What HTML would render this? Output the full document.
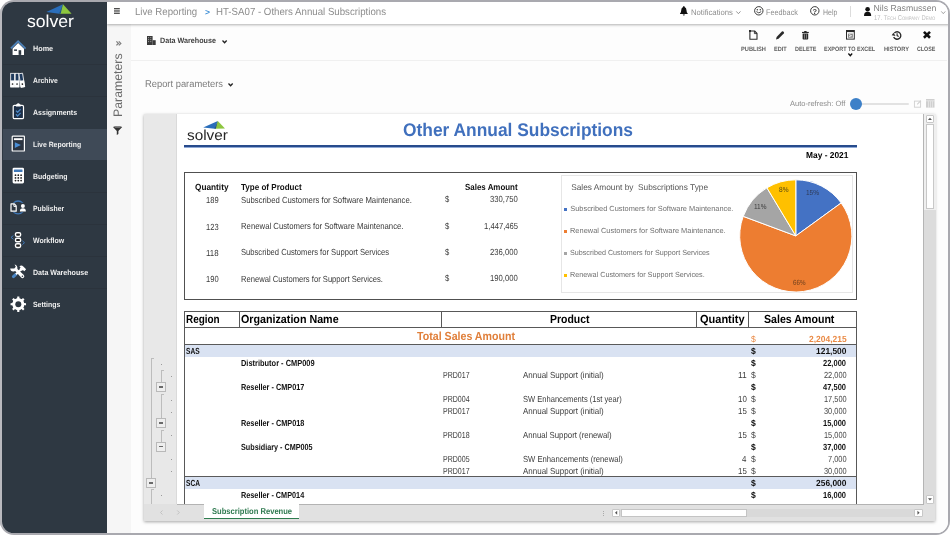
<!DOCTYPE html>
<html lang="en"><head><meta charset="utf-8"><title>Solver - Other Annual Subscriptions</title>
<style>
*{box-sizing:border-box;margin:0;padding:0}
html,body{width:950px;height:535px;background:#fff;overflow:hidden}
body{font-family:"Liberation Sans",sans-serif;position:relative}
#frame{position:absolute;left:0;top:0;width:950px;height:535px;border-radius:14px;overflow:hidden;background:#a9a9af}
#app{position:absolute;left:2.4px;top:1.8px;width:945.4px;height:530.8px;border-radius:11.5px;overflow:hidden;background:#fdfdfd}
#stage{position:absolute;left:-2.4px;top:-1.8px;width:950px;height:535px;will-change:transform}
.a{position:absolute}
.t{position:absolute;white-space:pre;transform-origin:0 50%;text-rendering:geometricPrecision}
svg{position:absolute;overflow:visible}
</style></head>
<body><div id="frame"><div class="a" style="left:0;top:8px;width:3px;height:519px;background:#b9b9be"></div><div id="app"><div id="stage">
<div class="a" style="left:107px;top:23px;width:24px;height:512px;background:#f6f6f6;"></div>
<div class="a" style="left:131px;top:23px;width:819px;height:512px;background:#fdfdfd;"></div>
<div class="a" style="left:107px;top:0px;width:843px;height:23.6px;background:#fff;box-shadow:0 0.5px 2.5px rgba(0,0,0,.3)"></div>
<div class="a" style="left:0px;top:0px;width:107px;height:535px;background:#2e3842;"></div>
<div class="a" style="left:2.5px;top:128.5px;width:104.5px;height:31.5px;background:#3f4a57;"></div>
<div class="a" style="left:2.5px;top:64px;width:104.5px;height:1px;background:#2b333c;"></div>
<div class="a" style="left:2.5px;top:96px;width:104.5px;height:1px;background:#2b333c;"></div>
<div class="a" style="left:2.5px;top:192px;width:104.5px;height:1px;background:#2b333c;"></div>
<div class="a" style="left:2.5px;top:224px;width:104.5px;height:1px;background:#2b333c;"></div>
<div class="a" style="left:2.5px;top:256px;width:104.5px;height:1px;background:#2b333c;"></div>
<div class="a" style="left:2.5px;top:288px;width:104.5px;height:1px;background:#2b333c;"></div>
<svg style="left:0px;top:0px" width="107" height="30" viewBox="0 0 107 30"><polygon points="46.3,12 63,4.2 59.4,13.8" fill="#2a6ebb"/><polygon points="63,4.2 71.6,13.8 59.4,13.8" fill="#8dc63f"/><polygon points="63,4.2 60.6,13.8 59,13.8" fill="#1d4f91"/></svg>
<svg style="left:10px;top:40px" width="16" height="16" viewBox="0 0 16 16"><polygon points="2.6,8.6 8.1,3 14,8.7 14,14.9 2.6,14.9" fill="#fff"/><polyline points="0.9,8.4 8.1,1.2 15.6,8.6" fill="none" stroke="#4d82ba" stroke-width="1.7" stroke-linejoin="miter"/><rect x="4.1" y="9.4" width="2.9" height="1.5" fill="#2e3842"/><rect x="8.6" y="10.2" width="2.6" height="4.7" fill="#2e3842"/></svg><svg style="left:10px;top:72px" width="16" height="16" viewBox="0 0 16 16"><rect x="0.7" y="1.3" width="3.7" height="13.6" fill="#1f3a5c" stroke="#fff" stroke-width="0.8"/><rect x="0.3" y="8.4" width="4.5" height="6.9" fill="#fff"/><circle cx="2.55" cy="12" r="0.85" fill="#222"/><rect x="5.2" y="1.3" width="3.7" height="13.6" fill="#1f3a5c" stroke="#fff" stroke-width="0.8"/><rect x="4.8" y="8.4" width="4.5" height="6.9" fill="#fff"/><circle cx="7.05" cy="12" r="0.85" fill="#222"/><g transform="rotate(-9 13 15)"><rect x="11.0" y="1.3" width="3.7" height="13.6" fill="#1f3a5c" stroke="#fff" stroke-width="0.8"/><rect x="10.6" y="8.4" width="4.5" height="6.9" fill="#fff"/><circle cx="12.85" cy="12" r="0.85" fill="#222"/></g></svg><svg style="left:10px;top:104px" width="16" height="16" viewBox="0 0 16 16"><rect x="3.2" y="1.4" width="10.3" height="13.3" rx="1.3" fill="#1d2f47" stroke="#fff" stroke-width="1.2"/><path d="M5.8,2.6 L6.6,0.2 Q8.3,-1.6 10,0.2 L10.8,2.6 Z" fill="#fff"/><polyline points="6,6.6 7.6,8.3 10.6,5.2" fill="none" stroke="#4a86c5" stroke-width="1.3"/><polyline points="6,10.3 7.6,12 10.6,8.9" fill="none" stroke="#4a86c5" stroke-width="1.3"/></svg><svg style="left:10px;top:136px" width="16" height="16" viewBox="0 0 16 16"><rect x="2.2" y="0.2" width="12.2" height="14.8" rx="0.6" fill="#2b3440" stroke="#fff" stroke-width="1.2"/><rect x="3.9" y="2.2" width="8.6" height="1.9" fill="#fff"/><polygon points="4.8,6.2 10.9,9.1 4.8,12" fill="#4a8fd6"/></svg><svg style="left:10px;top:168px" width="16" height="16" viewBox="0 0 16 16"><rect x="2.6" y="-0.3" width="11.4" height="15.7" rx="1.4" fill="#fff"/><rect x="3.9" y="1.6" width="8.6" height="2.5" rx="0.4" fill="#3f78b8"/><circle cx="5.5" cy="7.2" r="0.9" fill="#222"/><circle cx="5.5" cy="9.9" r="0.9" fill="#222"/><circle cx="5.5" cy="12.6" r="0.9" fill="#222"/><circle cx="8.3" cy="7.2" r="0.9" fill="#222"/><circle cx="8.3" cy="9.9" r="0.9" fill="#222"/><circle cx="8.3" cy="12.6" r="0.9" fill="#222"/><circle cx="11.1" cy="7.2" r="0.9" fill="#222"/><circle cx="11.1" cy="9.9" r="0.9" fill="#222"/><circle cx="11.1" cy="12.6" r="0.9" fill="#222"/></svg><svg style="left:10px;top:200px" width="16" height="16" viewBox="0 0 16 16"><circle cx="8.1" cy="7.4" r="6.4" fill="none" stroke="#3f78b8" stroke-width="1.3"/><rect x="-0.2" y="2.8" width="16.6" height="9.4" fill="#2e3842"/><path d="M1,3.9 H4.4 L6.2,5.8 V11.2 H1 Z" fill="none" stroke="#fff" stroke-width="1.2" stroke-linejoin="round"/><path d="M3.9,4 V6.4 H6" fill="none" stroke="#fff" stroke-width="1"/><circle cx="12.9" cy="6" r="2" fill="#fff"/><path d="M9.9,11.4 Q9.9,8.3 12.9,8.3 Q15.9,8.3 15.9,11.4 Z" fill="#fff"/></svg><svg style="left:10px;top:232px" width="16" height="16" viewBox="0 0 16 16"><rect x="5.5" y="0.7" width="5.1" height="3.7" rx="1.4" fill="#222" stroke="#fff" stroke-width="1.4"/><rect x="5.5" y="6.3" width="5.1" height="3.5" rx="1.4" fill="#222" stroke="#fff" stroke-width="1.4"/><rect x="5.5" y="11.7" width="5.1" height="3.8" rx="1.4" fill="#222" stroke="#fff" stroke-width="1.4"/><polyline points="3.4,3.6 1,5.4 3.4,7.2" fill="none" stroke="#3f78b8" stroke-width="1"/><polyline points="12.4,8.9 14.5,10.7 12.4,12.6" fill="none" stroke="#3f78b8" stroke-width="1"/></svg><svg style="left:10px;top:264px" width="16" height="16" viewBox="0 0 16 16"><line x1="3.4" y1="12.6" x2="5.6" y2="10.6" stroke="#4a86c5" stroke-width="3" stroke-linecap="round"/><line x1="6" y1="10.2" x2="11.5" y2="5" stroke="#fff" stroke-width="2"/><path d="M9.4,2.2 Q11.5,0.6 13.3,2.4 L16.1,5.3 L14.3,7.3 L12.9,6 L11.8,6.9 L9.6,4.6 L10.6,3.6 Z" fill="#fff"/><path d="M0.2,4.4 Q0.4,7.6 3.6,7.4 L5.2,7 L10.9,13.3 Q12.3,15 13.8,13.6 Q15.1,12.2 13.6,10.8 L7.4,4.9 Q7.7,1.4 4.6,0.6 L5.8,2.8 L4.3,4.6 L2.2,4.4 Z" fill="#fff"/><circle cx="12.4" cy="12.3" r="0.8" fill="#2e3842"/></svg><svg style="left:10px;top:296px" width="16" height="16" viewBox="0 0 16 16"><path d="M7.15,2.41 L7.26,0.47 L9.34,0.47 L9.45,2.41 L11.58,3.29 L13.03,2.00 L14.50,3.47 L13.21,4.92 L14.09,7.05 L16.03,7.16 L16.03,9.24 L14.09,9.35 L13.21,11.48 L14.50,12.93 L13.03,14.40 L11.58,13.11 L9.45,13.99 L9.34,15.93 L7.26,15.93 L7.15,13.99 L5.02,13.11 L3.57,14.40 L2.10,12.93 L3.39,11.48 L2.51,9.35 L0.57,9.24 L0.57,7.16 L2.51,7.05 L3.39,4.92 L2.10,3.47 L3.57,2.00 L5.02,3.29Z" fill="#fff"/><circle cx="8.3" cy="8.2" r="5.9" fill="#fff"/><circle cx="8.3" cy="8.2" r="3" fill="#2e3842"/></svg>
<div class="a" style="left:131px;top:60px;width:816px;height:1px;background:#f0f0f0;"></div>
<svg style="left:114.2px;top:8.3px" width="6" height="6" viewBox="0 0 6 6"><rect x="0" y="0" width="5.8" height="1.35" fill="#4d4d4d"/><rect x="0" y="2.3" width="5.8" height="1.35" fill="#4d4d4d"/><rect x="0" y="4.6" width="5.8" height="1.35" fill="#4d4d4d"/></svg><svg style="left:679.5px;top:6.2px" width="8" height="10" viewBox="0 0 8 10"><path d="M3.85,0 Q4.6,0 4.6,0.9 Q6.5,1.6 6.5,4.3 Q6.5,6.5 7.7,7.6 V8.1 H0 V7.6 Q1.2,6.5 1.2,4.3 Q1.2,1.6 3.1,0.9 Q3.1,0 3.85,0 Z" fill="#111"/><path d="M2.8,8.5 H4.9 Q4.9,9.6 3.85,9.6 Q2.8,9.6 2.8,8.5Z" fill="#111"/></svg><svg style="left:735.8px;top:11.2px" width="4.8" height="3.2" viewBox="0 0 4.8 3.2"><polyline points="0.3,0.4 2.4,2.7 4.5,0.4" fill="none" stroke="#8a8a8a" stroke-width="0.9"/></svg><svg style="left:753.7px;top:6.2px" width="10" height="10" viewBox="0 0 10 10"><circle cx="4.8" cy="4.8" r="4.2" fill="none" stroke="#3a3a3a" stroke-width="1"/><circle cx="3.3" cy="3.7" r="0.75" fill="#3a3a3a"/><circle cx="6.3" cy="3.7" r="0.75" fill="#3a3a3a"/><path d="M2.4,5.6 Q4.8,8.2 7.2,5.6" fill="none" stroke="#3a3a3a" stroke-width="0.9"/></svg><svg style="left:810.4px;top:6.2px" width="10" height="10" viewBox="0 0 10 10"><circle cx="4.8" cy="4.8" r="4.2" fill="none" stroke="#3a3a3a" stroke-width="1"/><text x="4.8" y="7.5" text-anchor="middle" font-family="Liberation Sans, sans-serif" font-weight="700" font-size="7.4" fill="#3a3a3a">?</text></svg><svg style="left:864.3px;top:7px" width="8" height="9.2" viewBox="0 0 8 9.2"><circle cx="3.6" cy="2.3" r="2.3" fill="#111"/><path d="M0,9 Q0,4.8 3.6,4.8 Q7.2,4.8 7.2,9 Z" fill="#111"/></svg><svg style="left:940.8px;top:10.8px" width="4.6" height="3.2" viewBox="0 0 4.6 3.2"><polyline points="0.3,0.4 2.3,2.7 4.3,0.4" fill="none" stroke="#9a9a9a" stroke-width="0.9"/></svg><svg style="left:147.2px;top:36px" width="9" height="9" viewBox="0 0 9 9"><rect x="0" y="0" width="5.6" height="9" fill="#3a3a3a"/><rect x="5.6" y="4.2" width="3.1" height="4.8" fill="#3a3a3a"/><rect x="1" y="1.2" width="1.1" height="0.9" fill="#fff" opacity="0.55"/><rect x="1" y="3.2" width="1.1" height="0.9" fill="#fff" opacity="0.55"/><rect x="1" y="5.2" width="1.1" height="0.9" fill="#fff" opacity="0.55"/><rect x="3.2" y="1.2" width="1.1" height="0.9" fill="#fff" opacity="0.55"/><rect x="3.2" y="3.2" width="1.1" height="0.9" fill="#fff" opacity="0.55"/><rect x="3.2" y="5.2" width="1.1" height="0.9" fill="#fff" opacity="0.55"/></svg><svg style="left:221.5px;top:39.6px" width="5.2" height="3.6" viewBox="0 0 5.2 3.6"><polyline points="0.5,0.5 2.6,2.7 4.7,0.5" fill="none" stroke="#222" stroke-width="1.3"/></svg><svg style="left:227.5px;top:82.6px" width="5.2" height="3.6" viewBox="0 0 5.2 3.6"><polyline points="0.5,0.5 2.6,2.7 4.7,0.5" fill="none" stroke="#222" stroke-width="1.3"/></svg><svg style="left:116px;top:41.1px" width="5.4" height="4.8" viewBox="0 0 5.4 4.8"><polyline points="0.4,0.4 2.4,2.4 0.4,4.4" fill="none" stroke="#808080" stroke-width="1.3"/><polyline points="2.8,0.4 4.8,2.4 2.8,4.4" fill="none" stroke="#808080" stroke-width="1.3"/></svg><svg style="left:112.9px;top:126.1px" width="9.4" height="9" viewBox="0 0 9.4 9"><path d="M0,0.9 Q4.6,-0.9 9.2,0.9 L5.4,4.9 V8 L3.8,8.9 V4.9 Z" fill="#333"/><ellipse cx="4.6" cy="0.9" rx="3.2" ry="0.55" fill="#aaa"/></svg>
<svg style="left:749.1px;top:30.1px" width="9" height="10" viewBox="0 0 9 10"><path d="M0.9,1 H5.6 L8,3.4 V9.2 H0.9 Z" fill="none" stroke="#2a2a2a" stroke-width="1.1" stroke-linejoin="round"/><path d="M5.4,1 V3.6 H8" fill="none" stroke="#2a2a2a" stroke-width="0.9"/><rect x="0" y="0" width="2" height="2" fill="#2a2a2a"/></svg><svg style="left:775.8px;top:30.7px" width="8.6" height="8.6" viewBox="0 0 8.6 8.6"><path d="M0,8.4 L0.6,5.9 L5.9,0.6 Q6.6,0 7.3,0.6 L7.9,1.2 Q8.4,1.9 7.8,2.5 L2.5,7.8 Z" fill="#2a2a2a"/></svg><svg style="left:802px;top:31px" width="7" height="8.8" viewBox="0 0 7 8.8"><rect x="0" y="0.9" width="6.8" height="1.1" fill="#2a2a2a"/><rect x="2.2" y="0" width="2.4" height="1.2" fill="#2a2a2a"/><path d="M0.6,2.6 H6.2 V7.8 Q6.2,8.6 5.4,8.6 H1.4 Q0.6,8.6 0.6,7.8 Z" fill="#2a2a2a"/><rect x="2.2" y="3.3" width="0.6" height="4.4" fill="#bbb"/><rect x="4" y="3.3" width="0.6" height="4.4" fill="#bbb"/></svg><svg style="left:845.8px;top:30.1px" width="9" height="9.6" viewBox="0 0 9 9.6"><rect x="0.5" y="0.5" width="7.8" height="8.6" fill="#fff" stroke="#2a2a2a" stroke-width="1"/><rect x="0.5" y="0.5" width="7.8" height="1.6" fill="#2a2a2a"/><rect x="1.9" y="3.6" width="5" height="4.2" fill="#888"/><path d="M3,4.6 L5.6,5.7 L3,6.8" fill="none" stroke="#fff" stroke-width="0.8"/></svg><svg style="left:847.8px;top:52.6px" width="4.6" height="3.6" viewBox="0 0 4.6 3.6"><polyline points="0.4,0.5 2.3,2.7 4.2,0.5" fill="none" stroke="#111" stroke-width="1.3"/></svg><svg style="left:892.1px;top:30.7px" width="9.2" height="8.6" viewBox="0 0 9.2 8.6"><path d="M2.3,2.1 A3.7,3.7 0 1 1 1.7,5.9" fill="none" stroke="#2a2a2a" stroke-width="1.35"/><polygon points="-0.3,3.3 3.6,3.9 1.4,0.8" fill="#2a2a2a" transform="translate(0,1)"/><polyline points="5.1,2.3 5.1,4.6 6.7,5.4" fill="none" stroke="#2a2a2a" stroke-width="1.1"/></svg><svg style="left:922.5px;top:31.3px" width="7.8" height="7.6" viewBox="0 0 7.8 7.6"><line x1="0.9" y1="0.9" x2="7" y2="6.7" stroke="#111" stroke-width="2.6"/><line x1="7" y1="0.9" x2="0.9" y2="6.7" stroke="#111" stroke-width="2.6"/></svg><svg style="left:914.3px;top:100.4px" width="7.6" height="7.6" viewBox="0 0 7.6 7.6"><rect x="0.4" y="1.1" width="6.2" height="6.1" fill="none" stroke="#cfcfcf" stroke-width="0.9"/><line x1="3.2" y1="4.4" x2="6.9" y2="0.6" stroke="#cfcfcf" stroke-width="1.1"/></svg><svg style="left:926.3px;top:99.4px" width="8.6" height="8.6" viewBox="0 0 8.6 8.6"><rect x="0" y="0" width="8.5" height="8.6" fill="#cfcfcf"/><rect x="2.1" y="2.2" width="0.5" height="6.4" fill="#f4f4f4"/><rect x="4.1" y="2.2" width="0.5" height="6.4" fill="#f4f4f4"/><rect x="6.1" y="2.2" width="0.5" height="6.4" fill="#f4f4f4"/><rect x="0" y="1.6" width="8.5" height="0.6" fill="#f4f4f4"/></svg>
<div class="a" style="left:850px;top:5.8px;width:1px;height:11.6px;background:#dcdcdc;"></div>
<span class="t" style="left:87px;top:79px;width:62px;height:14px;line-height:14px;font-size:12.3px;color:#6a6a6a;text-align:center;transform:rotate(-90deg);transform-origin:50% 50%">Parameters</span>
<div class="a" style="left:856px;top:103.2px;width:53px;height:2px;background:#e2e2e2;border-radius:1px"></div>
<div class="a" style="left:849.8px;top:98.3px;width:12px;height:12px;background:#3d80c8;border-radius:50%"></div>
<div class="a" style="left:144.3px;top:113.5px;width:791.2px;height:407.79999999999995px;background:#e8e8e8;box-shadow:0 1px 3px rgba(0,0,0,.35)"></div>
<div class="a" style="left:175.8px;top:113.5px;width:1px;height:390.5px;background:#dadada;"></div>
<div class="a" style="left:176.8px;top:113.5px;width:746.7px;height:390.5px;background:#fff;"></div>
<div class="a" style="left:923.5px;top:113.5px;width:12px;height:390.5px;background:#dcdcdc;"></div>
<div class="a" style="left:923.5px;top:113.5px;width:12px;height:96px;background:#efefef;"></div>
<div class="a" style="left:923.2px;top:113.5px;width:1px;height:390.5px;background:#b5b5b5;"></div>
<div class="a" style="left:925.7px;top:114.8px;width:8.5px;height:8.5px;background:#fff;border:1px solid #c8c8c8;border-radius:1px"></div>
<svg style="left:0px;top:0px" width="950" height="535" viewBox="0 0 950 535"><polygon points="927.95,120.05 929.95,117.85 931.95,120.05" fill="#555"/></svg>
<div class="a" style="left:925.7px;top:123.8px;width:8.5px;height:85px;background:#fff;border:1px solid #c8c8c8"></div>
<div class="a" style="left:925.7px;top:495px;width:8.5px;height:8.5px;background:#fff;border:1px solid #c8c8c8;border-radius:1px"></div>
<svg style="left:0px;top:0px" width="950" height="535" viewBox="0 0 950 535"><polygon points="927.95,498.25 929.95,500.45 931.95,498.25" fill="#555"/></svg>
<div class="a" style="left:144.3px;top:504px;width:791.2px;height:17.299999999999955px;background:#e1e1e1;"></div>
<div class="a" style="left:176.8px;top:503.6px;width:747px;height:1px;background:#b3b3b3;"></div>
<div class="a" style="left:203.5px;top:504px;width:95.7px;height:14.5px;background:#fff;border-bottom:1.3px solid #2e7d4f"></div>
<svg style="left:0px;top:0px" width="950" height="535" viewBox="0 0 950 535"><polyline points="162.5,510.5 160.5,512.5 162.5,514.5" fill="none" stroke="#c2c2c2" stroke-width="1"/><polyline points="177.3,510.5 179.3,512.5 177.3,514.5" fill="none" stroke="#c2c2c2" stroke-width="1"/></svg>
<div class="a" style="left:611.9px;top:508.5px;width:311px;height:8.4px;background:#d9d9d9;"></div>
<div class="a" style="left:620.5px;top:508.5px;width:126px;height:8.4px;background:#fff;border:1px solid #c4c4c4"></div>
<div class="a" style="left:611.9px;top:508.5px;width:8.6px;height:8.4px;background:#fff;border:1px solid #c8c8c8;border-radius:1px"></div>
<svg style="left:0px;top:0px" width="950" height="535" viewBox="0 0 950 535"><polygon points="617.1999999999999,510.70000000000005 614.9999999999999,512.7 617.1999999999999,514.7" fill="#555"/></svg>
<div class="a" style="left:914.2px;top:508.5px;width:8.5px;height:8.4px;background:#fff;border:1px solid #c8c8c8;border-radius:1px"></div>
<svg style="left:0px;top:0px" width="950" height="535" viewBox="0 0 950 535"><polygon points="917.45,510.70000000000005 919.6500000000001,512.7 917.45,514.7" fill="#555"/></svg>
<div class="a" style="left:603px;top:510.6px;width:1px;height:1px;background:#aaa;"></div>
<div class="a" style="left:603px;top:512.6px;width:1px;height:1px;background:#aaa;"></div>
<div class="a" style="left:603px;top:514.6px;width:1px;height:1px;background:#aaa;"></div>
<svg style="left:0px;top:0px" width="950" height="535" viewBox="0 0 950 535"><polygon points="203.2,127.6 217.8,121.1 214.6,128.8" fill="#2a6ebb"/><polygon points="217.8,121.1 225,128.6 214.6,128.8" fill="#8dc63f"/><polygon points="217.8,121.1 215.8,128.8 214.2,128.8" fill="#1d4f91"/></svg>
<div class="a" style="left:184px;top:144.7px;width:672.7px;height:2px;background:#274b8c;"></div>
<div class="a" style="left:184px;top:146.7px;width:672.7px;height:0.8px;background:#8fa9d6;"></div>
<div class="a" style="left:183.6px;top:172.4px;width:673.4px;height:127.4px;border:1px solid #505050"></div>
<div class="a" style="left:561px;top:175.2px;width:292px;height:118.2px;background:#fff;border:1px solid #e6e6e6"></div>
<div class="a" style="left:564px;top:207.6px;width:3.2px;height:3.2px;background:#4472c4;"></div>
<div class="a" style="left:564px;top:229.6px;width:3.2px;height:3.2px;background:#ed7d31;"></div>
<div class="a" style="left:564px;top:251.6px;width:3.2px;height:3.2px;background:#a5a5a5;"></div>
<div class="a" style="left:564px;top:273.6px;width:3.2px;height:3.2px;background:#ffc000;"></div>
<svg style="left:0px;top:0px" width="950" height="535" viewBox="0 0 950 535"><path d="M795.8,235.9 L795.80,179.80 A56.1,56.1 0 0 1 841.19,202.93 Z" fill="#4472c4" stroke="#fff" stroke-width="1" stroke-linejoin="round"/><path d="M795.8,235.9 L841.19,202.93 A56.1,56.1 0 1 1 743.22,216.35 Z" fill="#ed7d31" stroke="#fff" stroke-width="1" stroke-linejoin="round"/><path d="M795.8,235.9 L743.22,216.35 A56.1,56.1 0 0 1 766.91,187.81 Z" fill="#a5a5a5" stroke="#fff" stroke-width="1" stroke-linejoin="round"/><path d="M795.8,235.9 L766.91,187.81 A56.1,56.1 0 0 1 795.80,179.80 Z" fill="#ffc000" stroke="#fff" stroke-width="1" stroke-linejoin="round"/></svg>
<div class="a" style="left:183.8px;top:310.7px;width:673.2px;height:17.3px;border:1px solid #585858"></div>
<div class="a" style="left:239.1px;top:311px;width:1px;height:17px;background:#585858;"></div>
<div class="a" style="left:441.3px;top:311px;width:1px;height:17px;background:#585858;"></div>
<div class="a" style="left:696.3px;top:311px;width:1px;height:17px;background:#585858;"></div>
<div class="a" style="left:747.8px;top:311px;width:1px;height:17px;background:#585858;"></div>
<div class="a" style="left:183.8px;top:328px;width:1px;height:176px;background:#585858;"></div>
<div class="a" style="left:856px;top:328px;width:1px;height:175.5px;background:#585858;"></div>
<div class="a" style="left:184px;top:344px;width:673px;height:1px;background:#5a5a5a;"></div>
<div class="a" style="left:184.8px;top:345px;width:671.2px;height:12.1px;background:#d9e2f2;"></div>
<div class="a" style="left:184px;top:476.2px;width:673px;height:1px;background:#5a5a5a;"></div>
<div class="a" style="left:184.8px;top:477.2px;width:671.2px;height:11.5px;background:#d9e2f2;"></div>
<div class="a" style="left:151.2px;top:358px;width:1px;height:120px;background:#bcbcbc;"></div>
<div class="a" style="left:151.2px;top:358px;width:3px;height:1px;background:#bcbcbc;"></div>
<div class="a" style="left:160.7px;top:370px;width:1px;height:12.5px;background:#bcbcbc;"></div>
<div class="a" style="left:160.7px;top:370px;width:3px;height:1px;background:#bcbcbc;"></div>
<div class="a" style="left:160.7px;top:394.2px;width:1px;height:24px;background:#bcbcbc;"></div>
<div class="a" style="left:160.7px;top:394.2px;width:3px;height:0.8px;background:#bcbcbc;"></div>
<div class="a" style="left:160.7px;top:430.2px;width:1px;height:12px;background:#bcbcbc;"></div>
<div class="a" style="left:160.7px;top:430.2px;width:3px;height:0.8px;background:#bcbcbc;"></div>
<div class="a" style="left:151.2px;top:488.5px;width:1px;height:15.5px;background:#bcbcbc;"></div>
<div class="a" style="left:151.2px;top:488.5px;width:3px;height:1px;background:#bcbcbc;"></div>
<div class="a" style="left:155.9px;top:381.9px;width:10.4px;height:10.4px;background:#eeeeee;border:1px solid #b9b9b9"></div>
<div class="a" style="left:158.9px;top:386.4px;width:4.4px;height:1.3px;background:#6a6a6a;"></div>
<div class="a" style="left:155.9px;top:417.79999999999995px;width:10.4px;height:10.4px;background:#eeeeee;border:1px solid #b9b9b9"></div>
<div class="a" style="left:158.9px;top:422.29999999999995px;width:4.4px;height:1.3px;background:#6a6a6a;"></div>
<div class="a" style="left:155.9px;top:441.7px;width:10.4px;height:10.4px;background:#eeeeee;border:1px solid #b9b9b9"></div>
<div class="a" style="left:158.9px;top:446.2px;width:4.4px;height:1.3px;background:#6a6a6a;"></div>
<div class="a" style="left:146.10000000000002px;top:477.9px;width:10.4px;height:10.4px;background:#eeeeee;border:1px solid #b9b9b9"></div>
<div class="a" style="left:149.10000000000002px;top:482.4px;width:4.4px;height:1.3px;background:#6a6a6a;"></div>
<div class="a" style="left:161.2px;top:364px;width:1px;height:1px;background:#9a9a9a;"></div>
<div class="a" style="left:171.2px;top:376px;width:1px;height:1px;background:#9a9a9a;"></div>
<div class="a" style="left:171.2px;top:399.5px;width:1px;height:1px;background:#9a9a9a;"></div>
<div class="a" style="left:171.2px;top:411.5px;width:1px;height:1px;background:#9a9a9a;"></div>
<div class="a" style="left:171.2px;top:435.4px;width:1px;height:1px;background:#9a9a9a;"></div>
<div class="a" style="left:171.2px;top:459.2px;width:1px;height:1px;background:#9a9a9a;"></div>
<div class="a" style="left:171.2px;top:471.2px;width:1px;height:1px;background:#9a9a9a;"></div>
<div class="a" style="left:161.2px;top:495.3px;width:1px;height:1px;background:#9a9a9a;"></div>
<span class="t" style="left:26.90px;top:11px;font-size:17.20px;line-height:20px;color:#fff;transform:scaleX(1.0249);">solver</span>
<span class="t" style="left:32.90px;top:44px;font-size:7.60px;line-height:9px;color:#f0f0f0;font-weight:700;transform:scaleX(0.9522);">Home</span>
<span class="t" style="left:32.90px;top:76px;font-size:7.60px;line-height:9px;color:#f0f0f0;font-weight:700;transform:scaleX(0.8902);">Archive</span>
<span class="t" style="left:32.90px;top:108px;font-size:7.60px;line-height:9px;color:#f0f0f0;font-weight:700;transform:scaleX(0.9248);">Assignments</span>
<span class="t" style="left:32.90px;top:140px;font-size:7.60px;line-height:9px;color:#f0f0f0;font-weight:700;transform:scaleX(0.9046);">Live Reporting</span>
<span class="t" style="left:32.90px;top:172px;font-size:7.60px;line-height:9px;color:#f0f0f0;font-weight:700;transform:scaleX(0.9162);">Budgeting</span>
<span class="t" style="left:32.90px;top:204px;font-size:7.60px;line-height:9px;color:#f0f0f0;font-weight:700;transform:scaleX(0.8986);">Publisher</span>
<span class="t" style="left:32.90px;top:236px;font-size:7.60px;line-height:9px;color:#f0f0f0;font-weight:700;transform:scaleX(0.9139);">Workflow</span>
<span class="t" style="left:32.90px;top:268px;font-size:7.60px;line-height:9px;color:#f0f0f0;font-weight:700;transform:scaleX(0.9304);">Data Warehouse</span>
<span class="t" style="left:32.90px;top:300px;font-size:7.60px;line-height:9px;color:#f0f0f0;font-weight:700;transform:scaleX(0.9109);">Settings</span>
<span class="t" style="left:134.80px;top:7px;font-size:10.30px;line-height:11px;color:#8c8c8c;transform:scaleX(0.9367);">Live Reporting</span>
<span class="t" style="left:205.00px;top:7px;font-size:8.56px;line-height:10px;color:#3f8fd6;font-weight:700;">&gt;</span>
<span class="t" style="left:216.00px;top:7px;font-size:10.30px;line-height:11px;color:#8c8c8c;transform:scaleX(0.9400);">HT-SA07 - Others Annual Subscriptions</span>
<span class="t" style="left:691.00px;top:8px;font-size:8.10px;line-height:9px;color:#8c8c8c;transform:scaleX(0.9502);">Notifications</span>
<span class="t" style="left:766.20px;top:8px;font-size:8.10px;line-height:9px;color:#8c8c8c;transform:scaleX(0.8974);">Feedback</span>
<span class="t" style="left:823.40px;top:8px;font-size:8.10px;line-height:9px;color:#8c8c8c;transform:scaleX(0.8585);">Help</span>
<span class="t" style="left:873.60px;top:3px;font-size:8.70px;line-height:10px;color:#808080;">Nils Rasmussen</span>
<span class="t" style="left:873.80px;top:15px;font-size:7.00px;line-height:7px;color:#c0c0c0;transform:scaleX(0.8375);font-variant:small-caps;">17. Tech Company Demo</span>
<span class="t" style="left:160.00px;top:36px;font-size:7.80px;line-height:9px;color:#404040;font-weight:700;transform:scaleX(0.9209);">Data Warehouse</span>
<span class="t" style="left:145.00px;top:79px;font-size:9.80px;line-height:11px;color:#7d7d7d;transform:scaleX(0.9549);">Report parameters</span>
<span class="t" style="left:790.20px;top:99px;font-size:7.60px;line-height:9px;color:#8c8c8c;transform:scaleX(0.9875);">Auto-refresh: Off</span>
<span class="t" style="left:741.00px;top:46px;font-size:6.30px;line-height:7px;color:#606060;font-weight:700;transform:scaleX(0.9008);">PUBLISH</span>
<span class="t" style="left:773.80px;top:46px;font-size:6.30px;line-height:7px;color:#606060;font-weight:700;transform:scaleX(0.8854);">EDIT</span>
<span class="t" style="left:794.50px;top:46px;font-size:6.30px;line-height:7px;color:#606060;font-weight:700;transform:scaleX(0.8654);">DELETE</span>
<span class="t" style="left:824.10px;top:46px;font-size:6.30px;line-height:7px;color:#606060;font-weight:700;transform:scaleX(0.8676);">EXPORT TO EXCEL</span>
<span class="t" style="left:884.00px;top:46px;font-size:6.30px;line-height:7px;color:#606060;font-weight:700;transform:scaleX(0.9040);">HISTORY</span>
<span class="t" style="left:917.00px;top:46px;font-size:6.30px;line-height:7px;color:#606060;font-weight:700;transform:scaleX(0.8432);">CLOSE</span>
<span class="t" style="left:211.60px;top:506px;font-size:8.50px;line-height:10px;color:#2f7a50;font-weight:700;transform:scaleX(0.8925);">Subscription Revenue</span>
<span class="t" style="left:186.80px;top:128px;font-size:14.60px;line-height:16px;color:#262626;transform:scaleX(1.0504);">solver</span>
<span class="t" style="left:403.00px;top:119px;font-size:18.30px;line-height:21px;color:#4070bd;font-weight:700;transform:scaleX(0.9501);">Other Annual Subscriptions</span>
<span class="t" style="left:806.40px;top:150px;font-size:8.60px;line-height:10px;color:#000;font-weight:700;transform:scaleX(0.9751);">May - 2021</span>
<span class="t" style="left:195.30px;top:182px;font-size:8.80px;line-height:10px;color:#111;font-weight:700;transform:scaleX(0.9387);">Quantity</span>
<span class="t" style="left:241.00px;top:182px;font-size:8.80px;line-height:10px;color:#111;font-weight:700;transform:scaleX(0.9154);">Type of Product</span>
<span class="t" style="left:464.90px;top:182px;font-size:8.80px;line-height:10px;color:#111;font-weight:700;transform:scaleX(0.9016);">Sales Amount</span>
<span class="t" style="left:206.00px;top:195px;font-size:8.80px;line-height:10px;color:#3a3a3a;transform:scaleX(0.8579);">189</span>
<span class="t" style="left:241.00px;top:195px;font-size:8.80px;line-height:10px;color:#3a3a3a;transform:scaleX(0.8804);">Subscribed Customers for Software Maintenance.</span>
<span class="t" style="left:444.80px;top:194px;font-size:8.80px;line-height:10px;color:#3a3a3a;transform:scaleX(0.8764);">$</span>
<span class="t" style="left:490.00px;top:194px;font-size:8.80px;line-height:10px;color:#3a3a3a;transform:scaleX(0.8770);">330,750</span>
<span class="t" style="left:206.00px;top:222px;font-size:8.80px;line-height:10px;color:#3a3a3a;transform:scaleX(0.8579);">123</span>
<span class="t" style="left:241.00px;top:221px;font-size:8.80px;line-height:10px;color:#3a3a3a;transform:scaleX(0.8815);">Renewal Customers for Software Maintenance.</span>
<span class="t" style="left:444.80px;top:221px;font-size:8.80px;line-height:10px;color:#3a3a3a;transform:scaleX(0.8764);">$</span>
<span class="t" style="left:483.80px;top:221px;font-size:8.80px;line-height:10px;color:#3a3a3a;transform:scaleX(0.8712);">1,447,465</span>
<span class="t" style="left:206.00px;top:248px;font-size:8.80px;line-height:10px;color:#3a3a3a;transform:scaleX(0.8980);">118</span>
<span class="t" style="left:241.00px;top:247px;font-size:8.80px;line-height:10px;color:#3a3a3a;transform:scaleX(0.8654);">Subscribed Customers for Support Services</span>
<span class="t" style="left:444.80px;top:247px;font-size:8.80px;line-height:10px;color:#3a3a3a;transform:scaleX(0.8764);">$</span>
<span class="t" style="left:490.00px;top:247px;font-size:8.80px;line-height:10px;color:#3a3a3a;transform:scaleX(0.8770);">236,000</span>
<span class="t" style="left:206.00px;top:274px;font-size:8.80px;line-height:10px;color:#3a3a3a;transform:scaleX(0.8579);">190</span>
<span class="t" style="left:241.00px;top:274px;font-size:8.80px;line-height:10px;color:#3a3a3a;transform:scaleX(0.8669);">Renewal Customers for Support Services.</span>
<span class="t" style="left:444.80px;top:273px;font-size:8.80px;line-height:10px;color:#3a3a3a;transform:scaleX(0.8764);">$</span>
<span class="t" style="left:490.00px;top:273px;font-size:8.80px;line-height:10px;color:#3a3a3a;transform:scaleX(0.8770);">190,000</span>
<span class="t" style="left:571.20px;top:182px;font-size:8.30px;line-height:10px;color:#555;">Sales Amount by  Subscriptions Type</span>
<span class="t" style="left:570.30px;top:204px;font-size:7.40px;line-height:9px;color:#707070;">Subscribed Customers for Software Maintenance.</span>
<span class="t" style="left:570.30px;top:226px;font-size:7.40px;line-height:9px;color:#707070;transform:scaleX(1.0053);">Renewal Customers for Software Maintenance.</span>
<span class="t" style="left:570.30px;top:248px;font-size:7.40px;line-height:9px;color:#707070;transform:scaleX(0.9716);">Subscribed Customers for Support Services</span>
<span class="t" style="left:570.30px;top:270px;font-size:7.40px;line-height:9px;color:#707070;transform:scaleX(0.9789);">Renewal Customers for Support Services.</span>
<span class="t" style="left:806.00px;top:188px;font-size:7.40px;line-height:9px;color:#2f3a55;transform:scaleX(0.8786);">15%</span>
<span class="t" style="left:793.00px;top:278px;font-size:7.40px;line-height:9px;color:#6a3d1c;transform:scaleX(0.8448);">66%</span>
<span class="t" style="left:754.00px;top:202px;font-size:7.40px;line-height:9px;color:#3c3c3c;transform:scaleX(0.8772);">11%</span>
<span class="t" style="left:779.00px;top:185px;font-size:7.40px;line-height:9px;color:#5a4a10;transform:scaleX(0.8889);">8%</span>
<span class="t" style="left:185.80px;top:313px;font-size:11.70px;line-height:13px;color:#000;font-weight:700;transform:scaleX(0.8508);">Region</span>
<span class="t" style="left:241.40px;top:313px;font-size:11.70px;line-height:13px;color:#000;font-weight:700;transform:scaleX(0.9163);">Organization Name</span>
<span class="t" style="left:549.60px;top:313px;font-size:11.70px;line-height:13px;color:#000;font-weight:700;transform:scaleX(0.8946);">Product</span>
<span class="t" style="left:700.20px;top:313px;font-size:11.70px;line-height:13px;color:#000;font-weight:700;transform:scaleX(0.9408);">Quantity</span>
<span class="t" style="left:764.10px;top:313px;font-size:11.70px;line-height:13px;color:#000;font-weight:700;transform:scaleX(0.9084);">Sales Amount</span>
<span class="t" style="left:417.40px;top:330px;font-size:11.70px;line-height:13px;color:#e07f3a;font-weight:700;transform:scaleX(0.9091);">Total Sales Amount</span>
<span class="t" style="left:751.10px;top:334px;font-size:8.80px;line-height:10px;color:#ea8a45;transform:scaleX(0.9783);">$</span>
<span class="t" style="left:808.70px;top:334px;font-size:8.80px;line-height:10px;color:#ea8a45;font-weight:700;transform:scaleX(0.9606);">2,204,215</span>
<span class="t" style="left:185.60px;top:346px;font-size:8.80px;line-height:10px;color:#111;font-weight:700;transform:scaleX(0.7516);">SAS</span>
<span class="t" style="left:185.60px;top:478px;font-size:8.80px;line-height:10px;color:#111;font-weight:700;transform:scaleX(0.7536);">SCA</span>
<span class="t" style="left:815.80px;top:346px;font-size:8.80px;line-height:10px;color:#111;font-weight:700;transform:scaleX(0.9587);">121,500</span>
<span class="t" style="left:751.10px;top:346px;font-size:8.80px;line-height:10px;color:#111;font-weight:700;transform:scaleX(0.9783);">$</span>
<span class="t" style="left:823.30px;top:358px;font-size:8.80px;line-height:10px;color:#111;font-weight:700;transform:scaleX(0.8548);">22,000</span>
<span class="t" style="left:751.10px;top:358px;font-size:8.80px;line-height:10px;color:#111;font-weight:700;transform:scaleX(0.9783);">$</span>
<span class="t" style="left:241.40px;top:358px;font-size:8.80px;line-height:10px;color:#111;font-weight:700;transform:scaleX(0.8458);">Distributor - CMP009</span>
<span class="t" style="left:823.70px;top:370px;font-size:8.80px;line-height:10px;color:#444;transform:scaleX(0.8400);">22,000</span>
<span class="t" style="left:751.10px;top:370px;font-size:8.80px;line-height:10px;color:#444;transform:scaleX(0.9783);">$</span>
<span class="t" style="left:443.10px;top:370px;font-size:8.80px;line-height:10px;color:#3c3c3c;transform:scaleX(0.7996);">PRD017</span>
<span class="t" style="left:523.30px;top:370px;font-size:8.80px;line-height:10px;color:#3c3c3c;transform:scaleX(0.9067);">Annual Support (initial)</span>
<span class="t" style="left:737.90px;top:370px;font-size:8.80px;line-height:10px;color:#3c3c3c;transform:scaleX(0.9627);">11</span>
<span class="t" style="left:823.30px;top:382px;font-size:8.80px;line-height:10px;color:#111;font-weight:700;transform:scaleX(0.8548);">47,500</span>
<span class="t" style="left:751.10px;top:382px;font-size:8.80px;line-height:10px;color:#111;font-weight:700;transform:scaleX(0.9783);">$</span>
<span class="t" style="left:241.40px;top:382px;font-size:8.80px;line-height:10px;color:#111;font-weight:700;transform:scaleX(0.8311);">Reseller - CMP017</span>
<span class="t" style="left:823.70px;top:394px;font-size:8.80px;line-height:10px;color:#444;transform:scaleX(0.8400);">17,500</span>
<span class="t" style="left:751.10px;top:394px;font-size:8.80px;line-height:10px;color:#444;transform:scaleX(0.9783);">$</span>
<span class="t" style="left:443.10px;top:394px;font-size:8.80px;line-height:10px;color:#3c3c3c;transform:scaleX(0.7996);">PRD004</span>
<span class="t" style="left:523.30px;top:394px;font-size:8.80px;line-height:10px;color:#3c3c3c;transform:scaleX(0.8590);">SW Enhancements (1st year)</span>
<span class="t" style="left:737.90px;top:394px;font-size:8.80px;line-height:10px;color:#3c3c3c;transform:scaleX(0.8982);">10</span>
<span class="t" style="left:823.70px;top:406px;font-size:8.80px;line-height:10px;color:#444;transform:scaleX(0.8400);">30,000</span>
<span class="t" style="left:751.10px;top:406px;font-size:8.80px;line-height:10px;color:#444;transform:scaleX(0.9783);">$</span>
<span class="t" style="left:443.10px;top:406px;font-size:8.80px;line-height:10px;color:#3c3c3c;transform:scaleX(0.7996);">PRD017</span>
<span class="t" style="left:523.30px;top:406px;font-size:8.80px;line-height:10px;color:#3c3c3c;transform:scaleX(0.9067);">Annual Support (initial)</span>
<span class="t" style="left:737.90px;top:406px;font-size:8.80px;line-height:10px;color:#3c3c3c;transform:scaleX(0.8982);">15</span>
<span class="t" style="left:823.30px;top:418px;font-size:8.80px;line-height:10px;color:#111;font-weight:700;transform:scaleX(0.8548);">15,000</span>
<span class="t" style="left:751.10px;top:418px;font-size:8.80px;line-height:10px;color:#111;font-weight:700;transform:scaleX(0.9783);">$</span>
<span class="t" style="left:241.40px;top:418px;font-size:8.80px;line-height:10px;color:#111;font-weight:700;transform:scaleX(0.8311);">Reseller - CMP018</span>
<span class="t" style="left:823.70px;top:430px;font-size:8.80px;line-height:10px;color:#444;transform:scaleX(0.8400);">15,000</span>
<span class="t" style="left:751.10px;top:430px;font-size:8.80px;line-height:10px;color:#444;transform:scaleX(0.9783);">$</span>
<span class="t" style="left:443.10px;top:430px;font-size:8.80px;line-height:10px;color:#3c3c3c;transform:scaleX(0.7996);">PRD018</span>
<span class="t" style="left:523.30px;top:430px;font-size:8.80px;line-height:10px;color:#3c3c3c;transform:scaleX(0.8891);">Annual Support (renewal)</span>
<span class="t" style="left:737.90px;top:430px;font-size:8.80px;line-height:10px;color:#3c3c3c;transform:scaleX(0.8982);">15</span>
<span class="t" style="left:823.30px;top:442px;font-size:8.80px;line-height:10px;color:#111;font-weight:700;transform:scaleX(0.8548);">37,000</span>
<span class="t" style="left:751.10px;top:442px;font-size:8.80px;line-height:10px;color:#111;font-weight:700;transform:scaleX(0.9783);">$</span>
<span class="t" style="left:241.40px;top:442px;font-size:8.80px;line-height:10px;color:#111;font-weight:700;transform:scaleX(0.8227);">Subsidiary - CMP005</span>
<span class="t" style="left:827.70px;top:454px;font-size:8.80px;line-height:10px;color:#444;transform:scaleX(0.8449);">7,000</span>
<span class="t" style="left:751.10px;top:454px;font-size:8.80px;line-height:10px;color:#444;transform:scaleX(0.9783);">$</span>
<span class="t" style="left:443.10px;top:454px;font-size:8.80px;line-height:10px;color:#3c3c3c;transform:scaleX(0.7996);">PRD005</span>
<span class="t" style="left:523.30px;top:454px;font-size:8.80px;line-height:10px;color:#3c3c3c;transform:scaleX(0.8713);">SW Enhancements (renewal)</span>
<span class="t" style="left:742.30px;top:454px;font-size:8.80px;line-height:10px;color:#3c3c3c;transform:scaleX(0.8968);">4</span>
<span class="t" style="left:823.70px;top:466px;font-size:8.80px;line-height:10px;color:#444;transform:scaleX(0.8400);">30,000</span>
<span class="t" style="left:751.10px;top:466px;font-size:8.80px;line-height:10px;color:#444;transform:scaleX(0.9783);">$</span>
<span class="t" style="left:443.10px;top:466px;font-size:8.80px;line-height:10px;color:#3c3c3c;transform:scaleX(0.7996);">PRD017</span>
<span class="t" style="left:523.30px;top:466px;font-size:8.80px;line-height:10px;color:#3c3c3c;transform:scaleX(0.9067);">Annual Support (initial)</span>
<span class="t" style="left:737.90px;top:466px;font-size:8.80px;line-height:10px;color:#3c3c3c;transform:scaleX(0.8982);">15</span>
<span class="t" style="left:815.80px;top:478px;font-size:8.80px;line-height:10px;color:#111;font-weight:700;transform:scaleX(0.9587);">256,000</span>
<span class="t" style="left:751.10px;top:478px;font-size:8.80px;line-height:10px;color:#111;font-weight:700;transform:scaleX(0.9783);">$</span>
<span class="t" style="left:823.30px;top:490px;font-size:8.80px;line-height:10px;color:#111;font-weight:700;transform:scaleX(0.8548);">16,000</span>
<span class="t" style="left:751.10px;top:490px;font-size:8.80px;line-height:10px;color:#111;font-weight:700;transform:scaleX(0.9783);">$</span>
<span class="t" style="left:241.40px;top:490px;font-size:8.80px;line-height:10px;color:#111;font-weight:700;transform:scaleX(0.8285);">Reseller - CMP014</span>
</div></div></div></body></html>
